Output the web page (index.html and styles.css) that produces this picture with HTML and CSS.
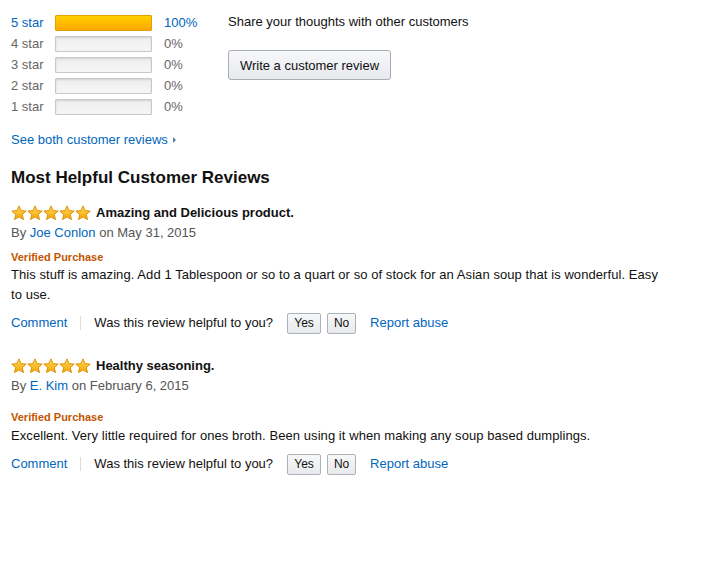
FILE: index.html
```html
<!DOCTYPE html>
<html>
<head>
<meta charset="utf-8">
<link rel="stylesheet" href="styles.css">
</head>
<body>
<svg width="0" height="0" class="defs">
  <defs>
    <linearGradient id="sg" x1="0" y1="0" x2="0" y2="1">
      <stop offset="0" stop-color="#ffd85c"/>
      <stop offset="1" stop-color="#f7a600"/>
    </linearGradient>
    <symbol id="star" viewBox="0 0 16 16">
      <path d="M8 0.9 L10.1 5.6 L15.2 6.1 L11.3 9.5 L12.5 14.6 L8 11.9 L3.5 14.6 L4.7 9.5 L0.8 6.1 L5.9 5.6 Z" fill="url(#sg)" stroke="#d98a00" stroke-width="0.9" stroke-linejoin="round"/>
    </symbol>
  </defs>
</svg>
<div class="page">
  <div class="top">
    <div class="histogram">
      <div class="hrow active"><a class="label">5 star</a><span class="bar"><span class="fill" style="width:100%"></span></span><a class="pct">100%</a></div>
      <div class="hrow"><span class="label">4 star</span><span class="bar"></span><span class="pct">0%</span></div>
      <div class="hrow"><span class="label">3 star</span><span class="bar"></span><span class="pct">0%</span></div>
      <div class="hrow"><span class="label">2 star</span><span class="bar"></span><span class="pct">0%</span></div>
      <div class="hrow"><span class="label">1 star</span><span class="bar"></span><span class="pct">0%</span></div>
    </div>
    <div class="share">
      <div class="share-text">Share your thoughts with other customers</div>
      <button class="write-btn">Write a customer review</button>
    </div>
  </div>
  <a class="see-all">See both customer reviews <span class="caret"></span></a>
  <h2 class="heading">Most Helpful Customer Reviews</h2>

  <div class="review">
    <div class="title-row">
      <span class="stars"><svg><use href="#star"/></svg><svg><use href="#star"/></svg><svg><use href="#star"/></svg><svg><use href="#star"/></svg><svg><use href="#star"/></svg></span>
      <span class="title">Amazing and Delicious product.</span>
    </div>
    <div class="byline">By <a class="link">Joe Conlon</a> on May 31, 2015</div>
    <div class="verified">Verified Purchase</div>
    <div class="body">This stuff is amazing. Add 1 Tablespoon or so to a quart or so of stock for an Asian soup that is wonderful. Easy to use.</div>
    <div class="actions">
      <a class="link">Comment</a>
      <span class="sep"></span>
      <span class="helpful">Was this review helpful to you?</span>
      <button class="small-btn yes">Yes</button>
      <button class="small-btn no">No</button>
      <a class="link report">Report abuse</a>
    </div>
  </div>

  <div class="review second">
    <div class="title-row">
      <span class="stars"><svg><use href="#star"/></svg><svg><use href="#star"/></svg><svg><use href="#star"/></svg><svg><use href="#star"/></svg><svg><use href="#star"/></svg></span>
      <span class="title">Healthy seasoning.</span>
    </div>
    <div class="byline">By <a class="link">E. Kim</a> on February 6, 2015</div>
    <div class="verified">Verified Purchase</div>
    <div class="body">Excellent. Very little required for ones broth. Been using it when making any soup based dumplings.</div>
    <div class="actions">
      <a class="link">Comment</a>
      <span class="sep"></span>
      <span class="helpful">Was this review helpful to you?</span>
      <button class="small-btn yes">Yes</button>
      <button class="small-btn no">No</button>
      <a class="link report">Report abuse</a>
    </div>
  </div>
</div>
</body>
</html>
```

FILE: styles.css
```css
html, body {
  margin: 0;
  padding: 0;
  background: #fff;
}
body {
  font-family: "Liberation Sans", Arial, sans-serif;
  font-size: 13px;
  line-height: 20px;
  color: #111;
}
.defs {
  position: absolute;
  width: 0;
  height: 0;
}
.page {
  padding: 12px 0 0 11px;
  width: 658px;
}
.top {
  display: flex;
}
.histogram {
  width: 217px;
}
.hrow {
  display: flex;
  align-items: center;
  height: 21px;
  color: #666;
}
.hrow .label {
  width: 44px;
}
.hrow.active .label,
.hrow.active .pct {
  color: #0066c0;
}
.bar {
  box-sizing: border-box;
  width: 97px;
  height: 16px;
  border: 1px solid #c8c8c8;
  border-radius: 1px;
  background: linear-gradient(#eeeeee, #f6f6f6);
  box-shadow: inset 0 1px 2px rgba(0,0,0,0.12);
  margin-right: 12px;
  position: relative;
  overflow: hidden;
}
.active .bar {
  border-color: #e0a000;
}
.fill {
  display: block;
  height: 100%;
  background: linear-gradient(#ffd000, #ffa800);
}
.pct {
  color: #666;
}
.share-text {
  color: #111;
}
.write-btn {
  margin-top: 18px;
  box-sizing: border-box;
  width: 163px;
  height: 30px;
  border: 1px solid #a9acb1;
  border-radius: 3px;
  background: linear-gradient(#f7f8fa, #e7e9ec);
  font-family: "Liberation Sans", Arial, sans-serif;
  font-size: 13px;
  color: #111;
  padding: 0;
}
.see-all {
  display: block;
  margin-top: 13px;
  color: #0066c0;
}
.caret {
  display: inline-block;
  width: 0;
  height: 0;
  border-left: 3px solid #5a7ca0;
  border-top: 3px solid transparent;
  border-bottom: 3px solid transparent;
  margin-left: 2px;
  vertical-align: 1px;
}
.heading {
  margin: 16px 0 0;
  font-size: 17px;
  line-height: 24px;
  font-weight: bold;
  color: #111;
}
.review {
  margin-top: 13px;
}
.review.second {
  margin-top: 22px;
}
.title-row {
  display: flex;
  align-items: center;
  height: 20px;
}
.stars {
  display: flex;
  margin-right: 5px;
}
.stars svg {
  width: 16px;
  height: 16px;
}
.title {
  font-weight: bold;
  color: #111;
}
.byline {
  color: #555;
}
.link {
  color: #0066c0;
}
.verified {
  margin-top: 6px;
  font-size: 11px;
  line-height: 16px;
  font-weight: bold;
  color: #c45500;
}
.second .verified {
  margin-top: 13px;
  margin-bottom: 1px;
}
.body {
  color: #111;
  letter-spacing: 0.07px;
}
.actions {
  display: flex;
  align-items: center;
  height: 22px;
  margin-top: 7px;
}
.sep {
  width: 1px;
  height: 14px;
  background: #ddd;
  margin: 0 13px 0 13px;
}
.helpful {
  color: #111;
  margin-right: 14px;
}
.small-btn {
  box-sizing: border-box;
  height: 21px;
  border: 1px solid #adb1b8;
  border-radius: 2px;
  background: linear-gradient(#f7f8fa, #e7e9ec);
  font-family: "Liberation Sans", Arial, sans-serif;
  font-size: 12px;
  color: #111;
  padding: 0;
}
.yes {
  width: 34px;
  margin-right: 6px;
}
.no {
  width: 29px;
  margin-right: 14px;
}
```
